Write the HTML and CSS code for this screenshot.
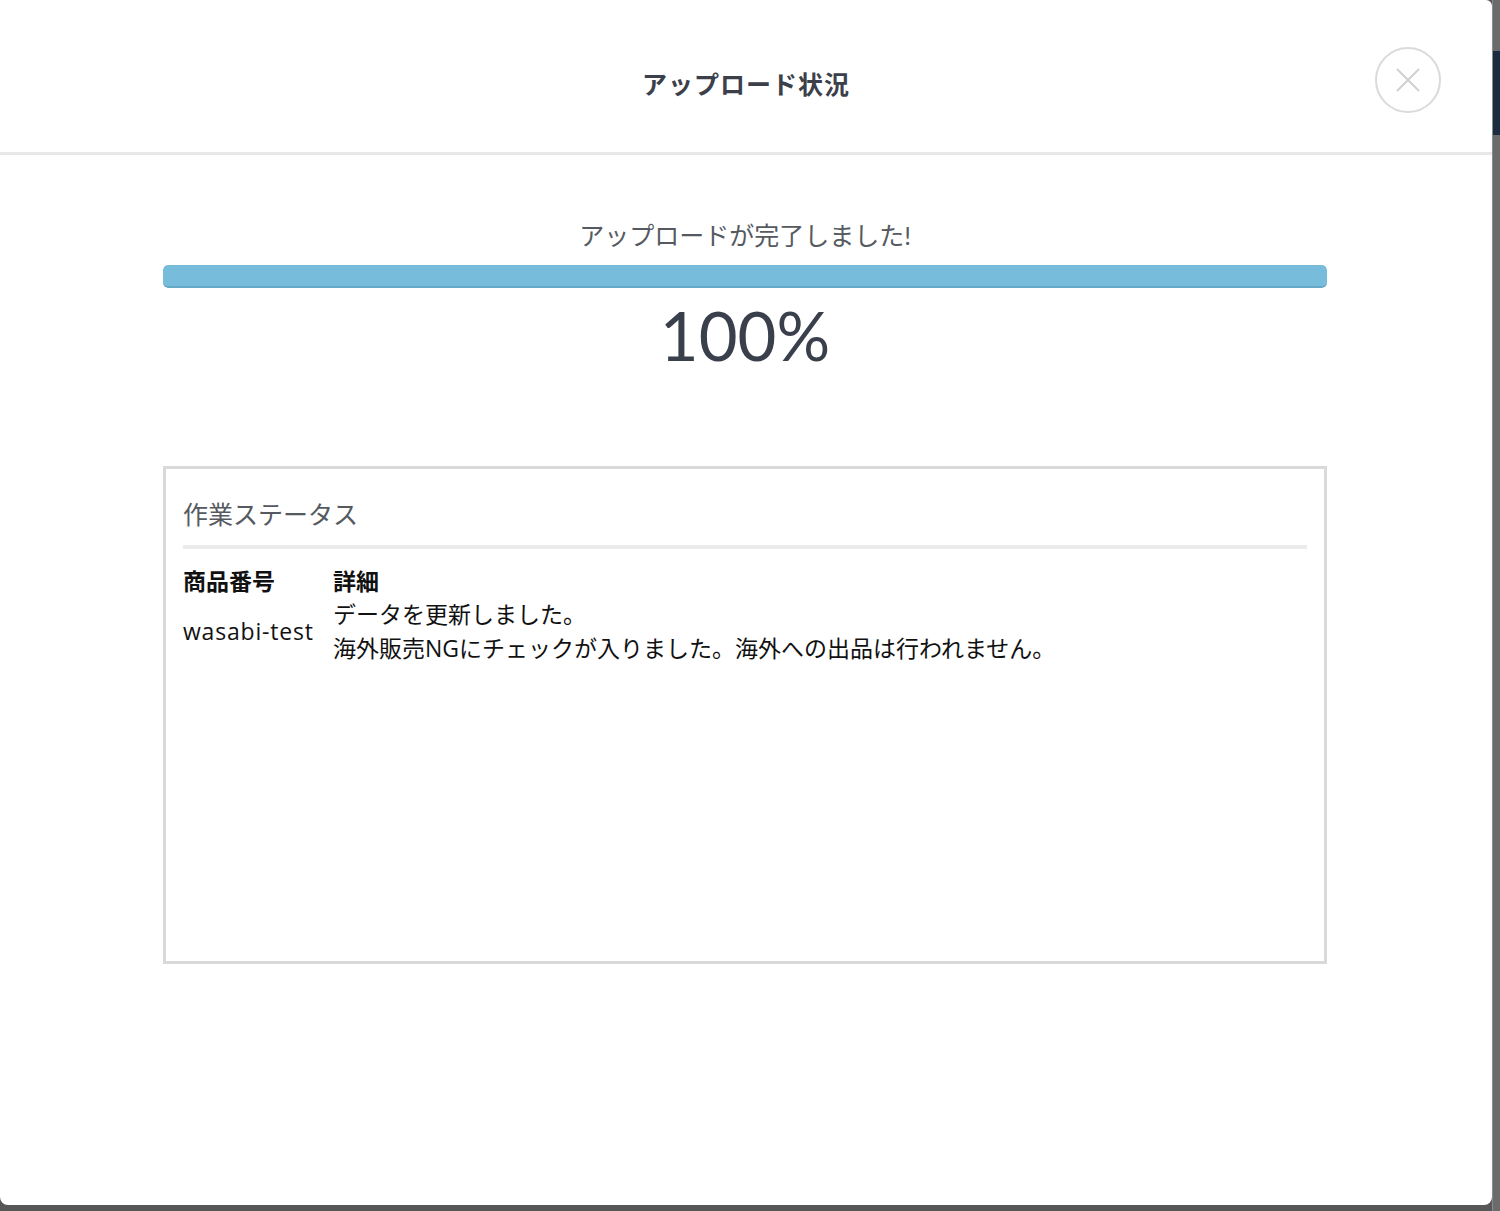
FILE: index.html
```html
<!DOCTYPE html>
<html lang="ja">
<head>
    <meta charset="UTF-8">
    <title>アップロード状況</title>
    <link rel="stylesheet" href="styles.css">
</head>
<body>
<div class="g-page">
    <div class="m-modal">
        <div class="m-modal-hd">
            <h2 class="u-title">アップロード状況</h2>
            <button class="u-close" aria-label="閉じる">
                <svg width="26" height="26" viewBox="0 0 26 26">
                    <path d="M2 2 L24 24 M24 2 L2 24" stroke="#d0d0d0" stroke-width="2" fill="none"/>
                </svg>
            </button>
        </div>
        <div class="m-modal-bd">
            <p class="u-msg">アップロードが完了しました!</p>
            <div class="m-progress">
                <div class="u-bar" style="width: 100%"></div>
            </div>
            <p class="u-percent">100%</p>

            <div class="m-status">
                <h3 class="u-status-hd">作業ステータス</h3>
                <table class="u-status-table">
                    <tr>
                        <th class="f-col1">商品番号</th>
                        <th>詳細</th>
                    </tr>
                    <tr>
                        <td class="f-col1 f-code">wasabi-test</td>
                        <td>データを更新しました。<br>海外販売NGにチェックが入りました。海外への出品は行われません。</td>
                    </tr>
                </table>
            </div>
        </div>
    </div>
    <!--背景ページ-->
    <div class="g-side">
        <div class="u-side-nav"></div>
    </div>
</div>
</body>
</html>
```

FILE: styles.css
```css
* {
    padding: 0;
    margin: 0;
    box-sizing: border-box;
}
body {
    background-color: #575757;
    font-family: "Lato", "Noto Sans CJK JP", sans-serif;
}
.g-page {
    display: flex;
    height: 1211px;
    overflow: hidden;
}
.m-modal {
    position: relative;
    width: 1492px;
    height: 1205px;
    background-color: #fff;
    border-radius: 0 6px 8px 8px;
    flex-shrink: 0;
}
.m-modal-hd {
    height: 155px;
    padding-top: 14px;
    border-bottom: 3px solid #e8e8e8;
    display: flex;
    align-items: center;
    justify-content: center;
}
.u-title {
    font-size: 25px;
    font-weight: bold;
    color: #3b404b;
    letter-spacing: 1px;
}
.u-close {
    position: absolute;
    top: 47px;
    right: 51px;
    width: 66px;
    height: 66px;
    border: 2px solid #dadada;
    border-radius: 50%;
    background: #fff;
    display: flex;
    align-items: center;
    justify-content: center;
    cursor: pointer;
    outline: none;
}
.m-modal-bd {
    padding: 63px 165px 0 163px;
}
.u-msg {
    font-size: 25px;
    line-height: 34px;
    text-align: center;
    color: #555a61;
}
.m-progress {
    margin-top: 13px;
    height: 23px;
    border-radius: 5px;
    overflow: hidden;
    background-color: #eee;
}
.u-bar {
    height: 100%;
    background-color: #77bcdb;
    border-bottom: 2px solid #66a9c6;
    border-radius: 5px;
}
.u-percent {
    margin-top: 7px;
    font-size: 67px;
    line-height: 80px;
    text-align: center;
    color: #3a3f4c;
}
.m-status {
    margin-top: 91px;
    height: 498px;
    border: 3px solid #d9d9d9;
    padding: 28px 17px 0;
}
.u-status-hd {
    font-size: 25px;
    font-weight: normal;
    line-height: 34px;
    color: #555a61;
    padding-bottom: 14px;
    border-bottom: 4px solid #ebebeb;
}
.u-status-table {
    margin-top: 16px;
    border-collapse: collapse;
    font-family: "Open Sans", "Noto Sans CJK JP", sans-serif;
    font-size: 23px;
    color: #111;
}
.u-status-table th {
    text-align: left;
    font-weight: bold;
    line-height: 32px;
    vertical-align: middle;
}
.u-status-table td {
    line-height: 34px;
    vertical-align: middle;
}
.f-col1 {
    width: 150px;
}
.f-code {
    letter-spacing: 0.8px;
}
.g-side {
    flex: 1;
    background-color: #6b6b6b;
    border-left: 1px solid #8a8a8a;
    padding-top: 51px;
}
.u-side-nav {
    height: 84px;
    background-color: #1c2b3f;
}
```
